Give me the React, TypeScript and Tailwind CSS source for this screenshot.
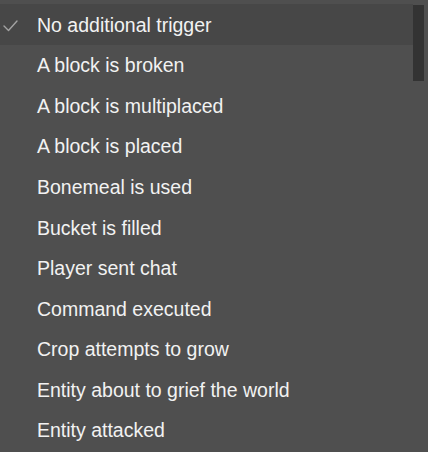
import React from "react";

const triggers = [
    "No additional trigger",
    "A block is broken",
    "A block is multiplaced",
    "A block is placed",
    "Bonemeal is used",
    "Bucket is filled",
    "Player sent chat",
    "Command executed",
    "Crop attempts to grow",
    "Entity about to grief the world",
    "Entity attacked",
];

const Check: React.FC = () => (
    <svg width="16" height="12" viewBox="0 0 16 12" fill="none">
        <polyline
            points="1,6 5.5,10.5 14,1"
            stroke="#a3a3a3"
            strokeWidth="1.4"
            strokeLinecap="round"
            strokeLinejoin="round"
        />
    </svg>
);

export default function App() {
    const selected = 0;

    return (
        <div
            className="w-[428px] h-[452px] overflow-hidden bg-[#4f4f4f] flex pt-[4px]"
            style={{ fontFamily: '"Liberation Sans", Arial, sans-serif' }}
        >
            <ul className="flex-1 flex flex-col">
                {triggers.map((t, i) => (
                    <li
                        key={t}
                        className={`h-[40.6px] shrink-0 flex items-center ${
                            i === selected ? "bg-[#474747]" : ""
                        }`}
                    >
                        <span className="w-[37px] shrink-0 flex justify-start pl-[3px] mt-[3px]">
                            {i === selected && <Check />}
                        </span>
                        <span className="text-[19.5px] text-[#f2f2f2] leading-none mt-[2px]">
                            {t}
                        </span>
                    </li>
                ))}
            </ul>
            <div className="w-[15px] shrink-0">
                <div className="w-[11px] h-[76px] mt-[1px] bg-[#333333]" />
            </div>
        </div>
    );
}
